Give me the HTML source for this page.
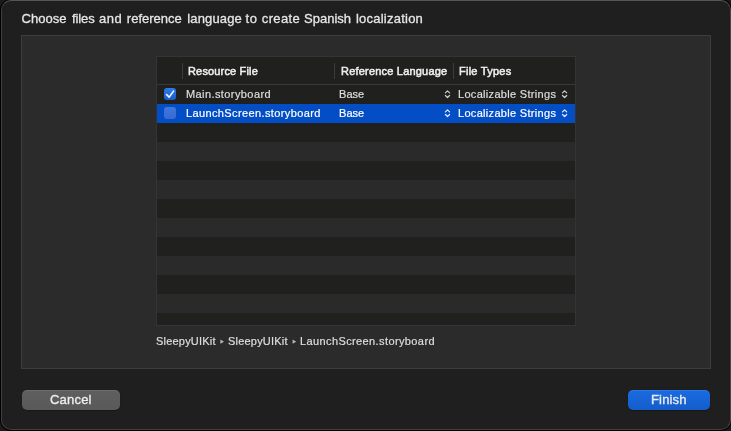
<!DOCTYPE html>
<html><head><meta charset="utf-8">
<style>
*{margin:0;padding:0;box-sizing:border-box}
html,body{width:731px;height:431px;overflow:hidden;background:#1b1b1b}
body{font-family:"Liberation Sans",sans-serif;position:relative;color:#dfdfdf}
.ring{position:absolute;left:0;top:-1px;width:732px;height:432px;background:#000;border-radius:11px}
.win{position:absolute;left:1px;top:0;width:730px;height:430px;background:#1f1f1f;border:1px solid #3f3f3f;border-top-color:#555;border-right-color:#474747;border-radius:10px}
.t{position:absolute;white-space:nowrap;transform-origin:0 0;line-height:1;will-change:transform}
.title{left:21px;top:12px;font-size:13px;color:#e6e6e6;-webkit-text-stroke:0.3px #e6e6e6}
.panel{position:absolute;left:21px;top:35px;width:690px;height:334px;background:#2b2b2b;border:1px solid #3d3d3d}
.table{position:absolute;left:156px;top:56px;width:420px;height:270px;background:#20201f;border:1px solid #343434;overflow:hidden}
.stripe{position:absolute;left:0;width:418px;height:19px;background:#2a2a2a}
.hsep{position:absolute;left:0;top:27px;width:418px;height:1px;background:#393939}
.vd{position:absolute;top:6px;width:1px;height:16px;background:#3c3c3c}
.sel{position:absolute;left:0;top:47px;width:418px;height:19px;background:#034dc5}
.h{font-size:11px;color:#f0f0f0;-webkit-text-stroke:0.5px #f0f0f0}
.c{font-size:11px;color:#dfdfdf;-webkit-text-stroke:0.2px #dfdfdf}
.cs{font-size:11px;color:#ffffff;-webkit-text-stroke:0.2px #fff}
.cb{position:absolute;left:7px;width:12px;height:12px;border-radius:3px}
.btn{position:absolute;top:390px;height:20px;border-radius:5px;box-shadow:inset 0 1px 0 rgba(255,255,255,.09),0 0 1px 0 rgba(0,0,0,.3),0 1px 1px rgba(0,0,0,.25)}
.cancel{left:22px;width:98px;background:linear-gradient(#5f5f5f,#595959)}
.finish{left:628px;width:82px;background:linear-gradient(#1a6be2,#145dca)}
.bt{font-size:13px;color:#ececec;-webkit-text-stroke:0.35px #ececec}
svg{position:absolute;overflow:visible}
</style></head><body>
<div class="ring"></div>
<div class="win"></div>
<div class="t title" id="title" style="width:410px;height:13px"><span style="position:absolute;left:0.60px;top:0;letter-spacing:0.024px">Choose</span><span style="position:absolute;left:51.00px;top:0;letter-spacing:-0.1px">files</span><span style="position:absolute;left:78.10px;top:0;letter-spacing:0.5px">and</span><span style="position:absolute;left:105.80px;top:0;letter-spacing:0.014px">reference</span><span style="position:absolute;left:166.30px;top:0;letter-spacing:0.133px">language</span><span style="position:absolute;left:224.60px;top:0;letter-spacing:0.6px">to</span><span style="position:absolute;left:240.80px;top:0;letter-spacing:0.360px">create</span><span style="position:absolute;left:283.00px;top:0;letter-spacing:0.008px">Spanish</span><span style="position:absolute;left:334.90px;top:0;letter-spacing:0.238px">localization</span></div>
<div class="panel"></div>
<div class="table">
  <div class="stripe" style="top:85px"></div>
  <div class="stripe" style="top:123px"></div>
  <div class="stripe" style="top:161px"></div>
  <div class="stripe" style="top:199px"></div>
  <div class="stripe" style="top:237px"></div>
  <div class="hsep"></div>
  <div class="vd" style="left:25px"></div>
  <div class="vd" style="left:177px"></div>
  <div class="vd" style="left:296px"></div>
  <div class="sel"></div>
  <div class="cb" style="top:31px;background:linear-gradient(#2d7bea,#185ece)"></div>
  <svg style="left:7px;top:31px" width="12" height="12" viewBox="0 0 12 12"><path d="M2.5 6.5 L5.2 9.1 L9.5 3.1" fill="none" stroke="#fff" stroke-width="1.55" stroke-linecap="round" stroke-linejoin="round"/></svg>
  <div class="cb" style="top:50px;background:linear-gradient(#4077de,#376ad2)"></div>
</div>
<div class="t h" id="h1" style="left:188px;top:66px;letter-spacing:0.160px">Resource File</div>
<div class="t h" id="h2" style="left:340.6px;top:66px;letter-spacing:0.200px">Reference Language</div>
<div class="t h" id="h3" style="left:459px;top:66px;letter-spacing:0.250px">File Types</div>
<div class="t c" id="r1a" style="left:186.3px;top:89px;letter-spacing:0.410px">Main.storyboard</div>
<div class="t c" id="r1b" style="left:339.3px;top:89px;letter-spacing:0.050px">Base</div>
<div class="t c" id="r1c" style="left:458.4px;top:89px;letter-spacing:0.310px">Localizable Strings</div>
<div class="t cs" id="r2a" style="left:186.3px;top:108px;letter-spacing:0.380px">LaunchScreen.storyboard</div>
<div class="t cs" id="r2b" style="left:339.3px;top:108px;letter-spacing:0.050px">Base</div>
<div class="t cs" id="r2c" style="left:458.4px;top:108px;letter-spacing:0.310px">Localizable Strings</div>
<div class="t c" id="bc1" style="left:156px;top:336px;letter-spacing:0.200px">SleepyUIKit</div>
<div class="t c" id="bc2" style="left:228px;top:336px;letter-spacing:0.200px">SleepyUIKit</div>
<div class="t c" id="bc3" style="left:300px;top:336px;letter-spacing:0.390px">LaunchScreen.storyboard</div>
<svg style="left:0;top:0" width="731" height="431" viewBox="0 0 731 431">
<g fill="none" stroke="#cfcfcf" stroke-width="1.2" stroke-linecap="round" stroke-linejoin="round">
<path d="M445.4 92.9 L447.5 90.9 L449.6 92.9 M445.4 95.5 L447.5 97.5 L449.6 95.5"/>
<path d="M562.5 92.9 L564.6 90.9 L566.7 92.9 M562.5 95.5 L564.6 97.5 L566.7 95.5"/>
</g>
<g fill="none" stroke="#e8eefc" stroke-width="1.2" stroke-linecap="round" stroke-linejoin="round">
<path d="M445.4 111.9 L447.5 109.9 L449.6 111.9 M445.4 114.5 L447.5 116.5 L449.6 114.5"/>
<path d="M562.5 111.9 L564.6 109.9 L566.7 111.9 M562.5 114.5 L564.6 116.5 L566.7 114.5"/>
</g>
<g fill="#b8b8b8">
<path d="M220.4 339.6 L224.0 341.65 L220.4 343.7 Z"/>
<path d="M292.6 339.6 L296.2 341.65 L292.6 343.7 Z"/>
</g>
</svg>
<div class="btn cancel"></div>
<div class="btn finish"></div>
<div class="t bt" id="bcancel" style="left:50px;top:392.6px;letter-spacing:0.200px">Cancel</div>
<div class="t bt" id="bfinish" style="left:651px;top:392.6px;letter-spacing:0.150px">Finish</div>
</body></html>
